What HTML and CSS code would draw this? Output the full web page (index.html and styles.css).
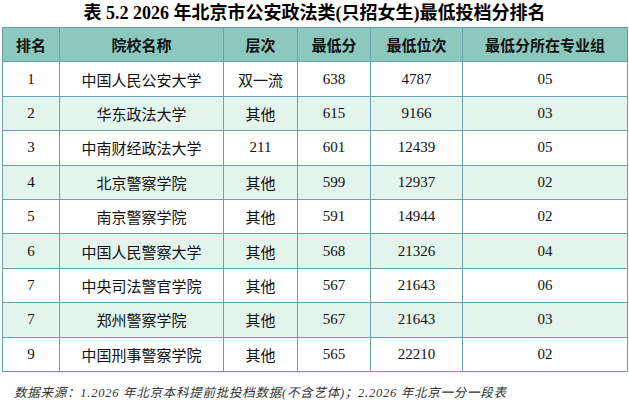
FILE: index.html
```html
<!DOCTYPE html>
<html lang="zh-CN">
<head>
<meta charset="utf-8">
<title>表 5.2 2026 年北京市公安政法类(只招女生)最低投档分排名</title>
<link rel="stylesheet" href="styles.css">
</head>
<body>
<div class="page">
  <h1 class="title">表 5.2 2026 年北京市公安政法类(只招女生)最低投档分排名</h1>
  <table class="rank">
    <colgroup>
      <col class="c1"><col class="c2"><col class="c3"><col class="c4"><col class="c5"><col class="c6">
    </colgroup>
    <thead>
      <tr><th>排名</th><th>院校名称</th><th>层次</th><th>最低分</th><th>最低位次</th><th>最低分所在专业组</th></tr>
    </thead>
    <tbody>
      <tr><td>1</td><td>中国人民公安大学</td><td>双一流</td><td>638</td><td>4787</td><td>05</td></tr>
      <tr><td>2</td><td>华东政法大学</td><td>其他</td><td>615</td><td>9166</td><td>03</td></tr>
      <tr><td>3</td><td>中南财经政法大学</td><td>211</td><td>601</td><td>12439</td><td>05</td></tr>
      <tr><td>4</td><td>北京警察学院</td><td>其他</td><td>599</td><td>12937</td><td>02</td></tr>
      <tr><td>5</td><td>南京警察学院</td><td>其他</td><td>591</td><td>14944</td><td>02</td></tr>
      <tr><td>6</td><td>中国人民警察大学</td><td>其他</td><td>568</td><td>21326</td><td>04</td></tr>
      <tr><td>7</td><td>中央司法警官学院</td><td>其他</td><td>567</td><td>21643</td><td>06</td></tr>
      <tr><td>7</td><td>郑州警察学院</td><td>其他</td><td>567</td><td>21643</td><td>03</td></tr>
      <tr><td>9</td><td>中国刑事警察学院</td><td>其他</td><td>565</td><td>22210</td><td>02</td></tr>
    </tbody>
  </table>
  <p class="note">数据来源：1.2026 年北京本科提前批投档数据(不含艺体)；2.2026 年北京一分一段表</p>
</div>
</body>
</html>
```

FILE: styles.css
```css
html, body {
  margin: 0;
  padding: 0;
  background: #ffffff;
}

body {
  font-family: "Liberation Serif", "Noto Sans CJK SC", serif;
  color: #111;
}

.page {
  width: 629px;
  height: 408px;
  overflow: hidden;
  padding: 0 2px;
  box-sizing: border-box;
}

.title {
  margin: 0;
  height: 27px;
  line-height: 26px;
  font-size: 18px;
  font-weight: bold;
  text-align: center;
  color: #000;
}

.rank {
  border-collapse: collapse;
  width: 625px;
  table-layout: fixed;
}

.c1 { width: 57px; }
.c2 { width: 164px; }
.c3 { width: 74px; }
.c4 { width: 73px; }
.c5 { width: 92px; }
.c6 { width: 165px; }

.rank th,
.rank td {
  border: 1px solid #64a3ad;
  padding: 0;
  text-align: center;
  font-size: 15px;
  height: 34.4px;
  box-sizing: border-box;
}

.rank th {
  background: #8dc8be;
  font-weight: bold;
  color: #111;
}

.rank td {
  font-weight: normal;
}

.rank tbody tr:nth-child(even) td {
  background: #e3f4ec;
}

.note {
  margin: 13px 0 0 12px;
  font-size: 12.5px;
  line-height: 16px;
  letter-spacing: 0.75px;
  font-style: italic;
  color: #333;
  white-space: nowrap;
}
```
